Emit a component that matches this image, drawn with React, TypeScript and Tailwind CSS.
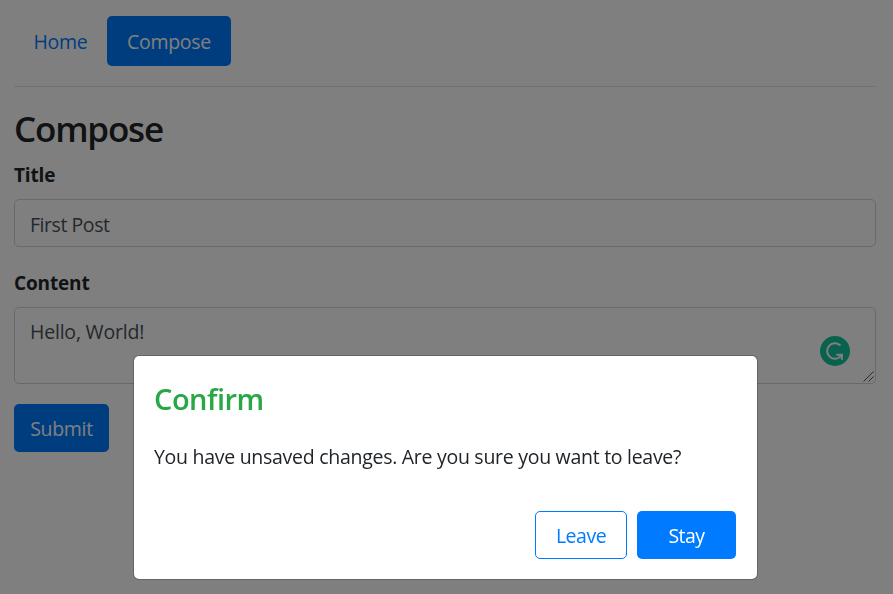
import { useState } from 'react';

function AssistantBadge() {
  return (
    <svg className="absolute right-[26px] top-[29px] h-[30px] w-[30px]" viewBox="0 0 30 30" fill="none">
      <circle cx="15" cy="15" r="15" fill="#15c39a" />
      <path d="M20.6 9.6A7.8 7.8 0 1 0 21.6 19" stroke="#fff" strokeWidth="2" />
      <path d="M16.4 18.8h5.5v5" stroke="#fff" strokeWidth="2" />
    </svg>
  );
}

function ResizeGrip() {
  return (
    <svg className="absolute bottom-[2px] right-[2px] h-[11px] w-[11px]" viewBox="0 0 11 11" stroke="#555" strokeWidth="1">
      <path d="M0.5 10.5l10-10M5.5 10.5l5-5" />
    </svg>
  );
}

function ConfirmDialog() {
  return (
    <div className="fixed inset-0 bg-black/50">
      <div
        role="dialog"
        className="absolute left-[133px] top-[355px] h-[225px] w-[625px] rounded-[6px] border border-black/20 bg-white bg-clip-padding pl-5 pr-[21px] pt-5"
      >
        <h4 className="mt-[5px] text-[29px] font-semibold leading-9 tracking-[-0.5px] text-[#28a745]">Confirm</h4>
        <p className="mt-[25px] h-[30px] whitespace-nowrap text-[19.5px] leading-[30px] tracking-[-0.28px]">
          You have unsaved changes. Are you sure you want to leave?
        </p>
        <div className="mt-[39px] flex justify-end gap-[10px]">
          <button className="h-12 w-[92px] rounded-[5px] border border-[#007bff] pt-[2px] text-[19.5px] tracking-[-0.5px] text-[#007bff]">
            Leave
          </button>
          <button className="h-12 w-[99px] rounded-[5px] bg-[#007bff] pt-[2px] text-[19.5px] tracking-[-0.5px] text-white">
            Stay
          </button>
        </div>
      </div>
    </div>
  );
}

export default function App() {
  const [title, setTitle] = useState('First Post');
  const [content, setContent] = useState('Hello, World!');

  return (
    <div className="h-[594px] overflow-hidden bg-white pl-[14px] pr-[17px] pt-4 font-['Open_Sans','Noto_Sans',sans-serif] text-[19.5px] leading-[30px] tracking-[-0.3px] text-[#212529]">
      <nav className="flex h-[50px]">
        <a className="flex w-[93px] items-center justify-center pt-[2px] text-[#007bff]">Home</a>
        <a className="flex w-[124px] items-center justify-center rounded-[5px] bg-[#007bff] pt-[2px] text-white">Compose</a>
      </nav>
      <hr className="mt-5 border-black/10" />
      <h2 className="mt-[21px] text-[35px] font-semibold leading-[42px] tracking-[-1.2px]">Compose</h2>
      <form>
        <label className="mt-[10px] block text-[19px] font-bold tracking-[-0.15px]">Title</label>
        <input
          className="mt-[9px] block h-12 w-full rounded-[5px] border border-[#ced4da] px-[15px] pt-[3px] tracking-[-0.45px] text-[#495057]"
          value={title}
          onChange={(e) => setTitle(e.target.value)}
        />
        <label className="mt-[21px] block text-[19px] font-bold tracking-[-0.15px]">Content</label>
        <div className="relative mt-[9px]">
          <textarea
            className="block h-[77px] w-full resize-none rounded-[5px] border border-[#ced4da] px-[15px] pt-[9px] tracking-[-0.2px] text-[#495057]"
            value={content}
            onChange={(e) => setContent(e.target.value)}
          />
          <AssistantBadge />
          <ResizeGrip />
        </div>
        <button type="button" className="mt-5 h-12 w-[95px] rounded-[5px] bg-[#007bff] pt-[2px] text-white">
          Submit
        </button>
      </form>
      <ConfirmDialog />
    </div>
  );
}
